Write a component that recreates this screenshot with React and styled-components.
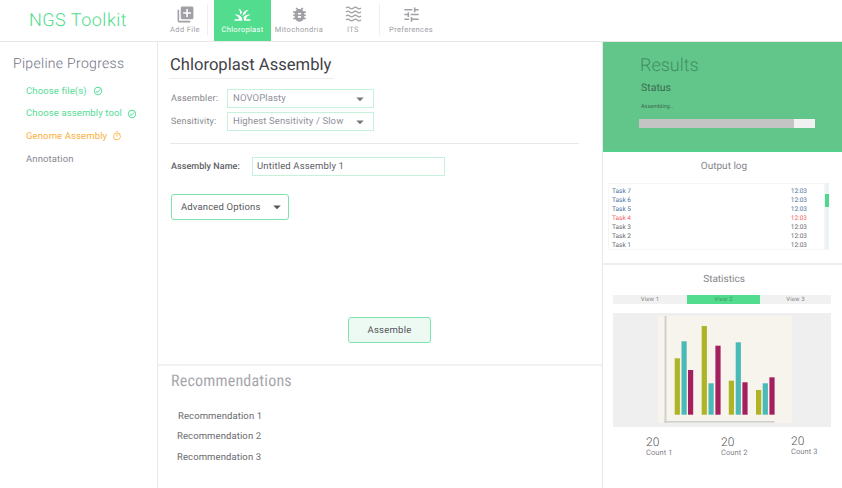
import React from "react";
import styled, { createGlobalStyle } from "styled-components";
import { MdLibraryAdd, MdBugReport, MdTune, MdGrass, MdOutlineCheckCircle, MdOutlineTimer, MdArrowDropDown } from "react-icons/md";

const GlobalStyle = createGlobalStyle`
  html, body { margin: 0; padding: 0; background: #fff; }
  body {
    font-family: Roboto, "Liberation Sans", sans-serif;
    text-rendering: geometricPrecision;
    white-space: nowrap;
  }
`;

const Page = styled.div`
  width: 842px;
  height: 488px;
  display: flex;
  flex-direction: column;
  overflow: hidden;
`;

const Header = styled.header`
  height: 41px;
  flex: none;
  display: flex;
  border-bottom: 1px solid #e8e8e8;
`;

const Brand = styled.div`
  width: 141px;
  padding-left: 29px;
  font-size: 18px;
  font-weight: 300;
  line-height: 41px;
  color: #4fdc8c;
  letter-spacing: 0.5px;
`;

const ToolItem = styled.div`
  width: ${(p) => p.$w}px;
  display: flex;
  flex-direction: column;
  align-items: center;
  padding-top: 5px;
  box-sizing: border-box;
  background: ${(p) => (p.$active ? "#52dd8e" : "transparent")};
  color: ${(p) => (p.$active ? "#fff" : "#a0a0a6")};
`;

const ToolLabel = styled.span`
  font-size: 7.5px;
  line-height: 9px;
  margin-top: 1px;
  letter-spacing: 0.35px;
`;

const ToolDivider = styled.div`
  width: 1px;
  height: 31px;
  margin: 4px ${(p) => p.$right}px 0 ${(p) => p.$left || 0}px;
  background: #eeeeee;
`;

const Body = styled.div`
  flex: 1;
  display: flex;
  min-height: 0;
`;

const Sidebar = styled.aside`
  width: 158px;
  flex: none;
  box-sizing: border-box;
  border-right: 1px solid #e8e8ee;
  padding: 13px 0 0 13px;
`;

const SideTitle = styled.h2`
  margin: 0 0 7px;
  font-size: 14px;
  line-height: 18px;
  font-weight: 300;
  color: #6f7282;
  letter-spacing: 0.3px;
`;

const Step = styled.div`
  height: 22.6px;
  margin-left: 13px;
  display: flex;
  align-items: center;
  gap: ${(p) => p.$gap || 0}px;
  font-size: 9.5px;
  letter-spacing: 0.12px;
  color: ${(p) => p.$color};
`;

const Main = styled.main`
  width: 444px;
  flex: none;
  display: flex;
  flex-direction: column;
`;

const Form = styled.section`
  height: 324px;
  flex: none;
  box-sizing: border-box;
  padding: 13px 23px 0 12px;
  border-bottom: 2px solid #f1f1f1;
  display: flex;
  flex-direction: column;
`;

const Title = styled.h1`
  width: 165px;
  margin: 0 0 10px -1px;
  padding: 0 0 1px 1px;
  box-sizing: border-box;
  font-size: 16.6px;
  line-height: 22px;
  font-weight: 400;
  color: #3f4247;
  border-bottom: 1px solid #eeeeee;
`;

const FieldRow = styled.div`
  display: flex;
  align-items: center;
  margin-bottom: 4px;
`;

const FieldLabel = styled.label`
  width: 57px;
  padding-left: 1px;
  box-sizing: border-box;
  font-size: 9px;
  letter-spacing: 0.2px;
  color: #85858b;
`;

const Select = styled.div`
  width: 147px;
  height: 19px;
  box-sizing: border-box;
  border: 1px solid #c6f2dc;
  padding: 0 4px 0 5px;
  display: flex;
  align-items: center;
  justify-content: space-between;
  font-size: 9.5px;
  letter-spacing: 0.12px;
  color: #8f9098;
`;

const Rule = styled.hr`
  width: 409px;
  margin: 8px 0 13px;
  border: 0;
  border-top: 1px solid #e7e7ee;
`;

const NameRow = styled.div`
  display: flex;
  align-items: center;
`;

const NameLabel = styled.label`
  width: 82px;
  padding-left: 1px;
  box-sizing: border-box;
  font-size: 9px;
  font-weight: 500;
  letter-spacing: 0.05px;
  color: #5f6066;
`;

const NameInput = styled.div`
  width: 193px;
  height: 19px;
  box-sizing: border-box;
  border: 1px solid #c6f2dc;
  padding-left: 4px;
  display: flex;
  align-items: center;
  font-size: 9.5px;
  letter-spacing: 0.15px;
  color: #5f6066;
`;

const AdvancedButton = styled.div`
  width: 118px;
  height: 26px;
  margin: 18px 0 0 1px;
  box-sizing: border-box;
  border: 1px solid #7de3ad;
  border-radius: 3px;
  padding: 0 2px 0 9px;
  display: flex;
  align-items: center;
  justify-content: space-between;
  font-size: 9.5px;
  letter-spacing: 0.15px;
  color: #5a5b61;
`;

const AssembleButton = styled.div`
  width: 83px;
  height: 26px;
  margin: 97px 0 0 178px;
  box-sizing: border-box;
  border: 1px solid #7de3ad;
  border-radius: 3px;
  background: #edf9f3;
  display: flex;
  align-items: center;
  justify-content: center;
  font-size: 9.5px;
  letter-spacing: 0.25px;
  color: #55565c;
`;

const Recs = styled.section`
  padding: 5px 0 0 13px;
`;

const RecTitle = styled.h2`
  margin: 0 0 15.8px;
  font-size: 16px;
  line-height: 20px;
  font-weight: 400;
  font-stretch: 75%;
  letter-spacing: 0.2px;
  color: #a6a7ad;
`;

const RecItem = styled.div`
  height: 20.6px;
  line-height: 20.6px;
  margin-left: ${(p) => p.$indent}px;
  font-size: 9.5px;
  letter-spacing: 0.1px;
  color: #6a6a70;
`;

const Right = styled.aside`
  flex: 1;
  box-sizing: border-box;
  border-left: 1px solid #e4e6f0;
  display: flex;
  flex-direction: column;
`;

const Results = styled.section`
  height: 110px;
  flex: none;
  box-sizing: border-box;
  background: #62c68a;
  border-bottom: 2px solid #55d08a;
  padding: 13px 0 0 37px;
`;

const ResultsTitle = styled.h2`
  margin: 0;
  font-size: 18px;
  line-height: 22px;
  font-weight: 300;
  color: #3f8f62;
`;

const StatusLabel = styled.div`
  margin: 5px 0 0 1px;
  font-size: 10.5px;
  line-height: 12px;
  color: #3b6a4e;
`;

const ProgressLabel = styled.div`
  margin: 9px 0 0 1px;
  font-size: 5.5px;
  line-height: 8px;
  color: #3b6a4e;
`;

const Progress = styled.div`
  width: 176px;
  height: 9px;
  margin: 8px 0 0 -1px;
  background: #f1f1f1;
`;

const ProgressFill = styled.div`
  height: 100%;
  background: #c4c4c4;
`;

const LogSection = styled.section`
  height: 113px;
  flex: none;
  box-sizing: border-box;
  border-bottom: 2px solid #eeeef2;
  padding-top: 9px;
`;

const PanelTitle = styled.h3`
  margin: 0;
  padding-left: ${(p) => p.$pad || 0}px;
  text-align: center;
  font-size: 10px;
  line-height: 12px;
  font-weight: 400;
  color: #85858b;
`;

const LogWrap = styled.div`
  display: flex;
  width: 221px;
  height: 67px;
  margin: 10px 0 0 5px;
`;

const LogBox = styled.div`
  flex: 1;
  box-sizing: border-box;
  border: 1px solid #f6f6f8;
  padding: 3px 0 0 3px;
`;

const LogRow = styled.div`
  height: 9px;
  display: flex;
  justify-content: space-between;
  padding-right: 17px;
  font-size: 6.5px;
  line-height: 9px;
  color: ${(p) => p.$color};
`;

const ScrollTrack = styled.div`
  width: 4px;
  background: #eaf4f6;
  padding-top: 11px;
`;

const ScrollThumb = styled.div`
  height: 13px;
  background: #4fd68f;
`;

const StatsSection = styled.section`
  flex: 1;
  padding-top: 9px;
`;

const Tabs = styled.div`
  display: grid;
  grid-template-columns: 74px 73px 71px;
  width: 218px;
  height: 9px;
  margin: 9px 0 0 10px;
  background: #f1f1f1;
`;

const Tab = styled.div`
  text-align: center;
  font-size: 6px;
  line-height: 9px;
  letter-spacing: 0.1px;
  color: ${(p) => (p.$active ? "#3f9a66" : "#85858b")};
  background: ${(p) => (p.$active ? "#52dd8e" : "transparent")};
`;

const ChartPanel = styled.div`
  width: 218px;
  height: 114px;
  margin: 9px 0 0 10px;
  padding: 3px 0 0 45px;
  box-sizing: border-box;
  background: #efefef;
`;

const Counts = styled.div`
  display: flex;
  margin: 9px 0 0 43px;
`;

const Count = styled.div`
  width: ${(p) => p.$w}px;
  margin-top: ${(p) => (p.$lift ? -1 : 0)}px;
  color: #85858b;
`;

const CountValue = styled.div`
  font-size: 12px;
  line-height: 12px;
  font-weight: 300;
  color: #55565c;
`;

const CountLabel = styled.div`
  font-size: 7.5px;
  line-height: 9px;
  letter-spacing: 0.1px;
`;

const WavesIcon = () => (
  <svg width="19" height="19" viewBox="0 0 19 19" fill="none" stroke="currentColor" strokeWidth="1.2">
    {[3, 7, 11, 15].map((y) => (
      <path key={y} d={`M2 ${y} q2 -1.8 3.75 0 t3.75 0 t3.75 0 t3.75 0`} />
    ))}
  </svg>
);

const bars = [
  { x: 16.7, top: 42.3, c: "#aeb425" }, { x: 23.5, top: 25.3, c: "#4bb9b6" }, { x: 30, top: 54, c: "#a41f5e" },
  { x: 43.7, top: 10, c: "#aeb425" }, { x: 50.5, top: 67.3, c: "#4bb9b6" }, { x: 57.4, top: 29.7, c: "#a41f5e" },
  { x: 70.8, top: 64.7, c: "#aeb425" }, { x: 77.7, top: 26.3, c: "#4bb9b6" }, { x: 84.4, top: 66.3, c: "#a41f5e" },
  { x: 98, top: 74, c: "#aeb425" }, { x: 104.7, top: 67.3, c: "#4bb9b6" }, { x: 111.4, top: 61.3, c: "#a41f5e" },
];

const BarChart = () => (
  <svg width="134" height="107" viewBox="0 0 134 107" style={{ display: "block" }}>
    <rect width="134" height="107" fill="#f6f4ec" />
    <rect x="6.5" y="0" width="2" height="107" fill="#cfcfcb" />
    <rect x="6.5" y="105" width="110" height="1.6" fill="#cfcfcb" />
    {bars.map((b) => (
      <rect key={b.x} x={b.x} y={b.top} width="5.2" height={98.7 - b.top} fill={b.c} />
    ))}
  </svg>
);

const tasks = [
  ["Task 7", "#4a6f9c"], ["Task 6", "#4a6f9c"], ["Task 5", "#4a6f9c"], ["Task 4", "#f2605c"],
  ["Task 3", "#66666c"], ["Task 2", "#66666c"], ["Task 1", "#66666c"],
];

export default function App() {
  return (
    <Page>
      <GlobalStyle />
      <Header>
        <Brand>NGS Toolkit</Brand>
        <ToolItem $w={30}><MdLibraryAdd size={19} /><ToolLabel>Add File</ToolLabel></ToolItem>
        <ToolDivider $left={7} $right={6} />
        <ToolItem $w={57} $active><MdGrass size={19} /><ToolLabel>Chloroplast</ToolLabel></ToolItem>
        <ToolItem $w={56}><MdBugReport size={19} /><ToolLabel>Mitochondria</ToolLabel></ToolItem>
        <ToolItem $w={52}><WavesIcon /><ToolLabel>ITS</ToolLabel></ToolItem>
        <ToolDivider $right={0} />
        <ToolItem $w={62}><MdTune size={19} /><ToolLabel>Preferences</ToolLabel></ToolItem>
      </Header>
      <Body>
        <Sidebar>
          <SideTitle>Pipeline Progress</SideTitle>
          <Step $color="#55dc96" $gap={6}>Choose file(s) <MdOutlineCheckCircle size={10} /></Step>
          <Step $color="#55dc96" $gap={5}>Choose assembly tool <MdOutlineCheckCircle size={10} /></Step>
          <Step $color="#fbb040" $gap={5}>Genome Assembly <MdOutlineTimer size={10} /></Step>
          <Step $color="#8a8a92">Annotation</Step>
        </Sidebar>
        <Main>
          <Form>
            <Title>Chloroplast Assembly</Title>
            <FieldRow>
              <FieldLabel>Assembler:</FieldLabel>
              <Select>NOVOPlasty <MdArrowDropDown size={18} color="#77787e" /></Select>
            </FieldRow>
            <FieldRow>
              <FieldLabel>Sensitivity:</FieldLabel>
              <Select>Highest Sensitivity / Slow <MdArrowDropDown size={18} color="#77787e" /></Select>
            </FieldRow>
            <Rule />
            <NameRow>
              <NameLabel>Assembly Name:</NameLabel>
              <NameInput>Untitled Assembly 1</NameInput>
            </NameRow>
            <AdvancedButton>Advanced Options <MdArrowDropDown size={18} color="#55565c" /></AdvancedButton>
            <AssembleButton>Assemble</AssembleButton>
          </Form>
          <Recs>
            <RecTitle>Recommendations</RecTitle>
            <RecItem $indent={7}>Recommendation 1</RecItem>
            <RecItem $indent={6}>Recommendation 2</RecItem>
            <RecItem $indent={6}>Recommendation 3</RecItem>
          </Recs>
        </Main>
        <Right>
          <Results>
            <ResultsTitle>Results</ResultsTitle>
            <StatusLabel>Status</StatusLabel>
            <ProgressLabel>Assembling...</ProgressLabel>
            <Progress><ProgressFill style={{ width: "88%" }} /></Progress>
          </Results>
          <LogSection>
            <PanelTitle $pad={3}>Output log</PanelTitle>
            <LogWrap>
              <LogBox>
                {tasks.map(([name, color]) => (
                  <LogRow key={name} $color={color}><span>{name}</span><span>12:03</span></LogRow>
                ))}
              </LogBox>
              <ScrollTrack><ScrollThumb /></ScrollTrack>
            </LogWrap>
          </LogSection>
          <StatsSection>
            <PanelTitle $pad={3}>Statistics</PanelTitle>
            <Tabs>
              <Tab>View 1</Tab>
              <Tab $active>View 2</Tab>
              <Tab>View 3</Tab>
            </Tabs>
            <ChartPanel><BarChart /></ChartPanel>
            <Counts>
              <Count $w={75}><CountValue>20</CountValue><CountLabel>Count 1</CountLabel></Count>
              <Count $w={70}><CountValue>20</CountValue><CountLabel>Count 2</CountLabel></Count>
              <Count $w={40} $lift><CountValue>20</CountValue><CountLabel>Count 3</CountLabel></Count>
            </Counts>
          </StatsSection>
        </Right>
      </Body>
    </Page>
  );
}
